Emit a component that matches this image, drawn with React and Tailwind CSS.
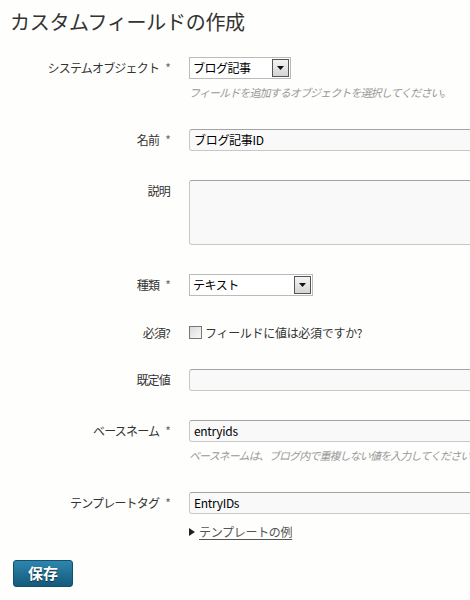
import React from 'react';

const font = { fontFamily: '"Noto Sans CJK JP", "Liberation Sans", sans-serif' };

// small select with the old-style arrow button
const Select = ({ value, width }) => (
  <div className={`flex h-[22px] items-center border border-[#bbb] bg-white ${width}`}>
    <span className="flex-1 pl-[3px] text-[12px] leading-none tracking-[-0.5px] text-black">{value}</span>
    <span className="mr-px flex h-[18px] w-[17px] items-center justify-center border border-[#555] bg-gradient-to-b from-[#f4f4f4] to-[#d4d4d4]">
      <svg width="7" height="4" viewBox="0 0 7 4"><path d="M0 0h7L3.5 4z" fill="#111" /></svg>
    </span>
  </div>
);

const Input = ({ value, tall }) => (
  <div className={`w-[300px] rounded-[3px] border border-[#c8c8c8] border-t-[#a4a4a4] bg-[#f9f9fa] px-[4px] text-[12px] tracking-[-0.3px] text-black ${tall ? 'h-[65px]' : 'flex h-[22px] items-center'}`}>
    {value}
  </div>
);

const Row = ({ label, req, children }) => (
  <div className="flex">
    <div className="w-[170px] shrink-0 pt-[2px] text-right text-[12px] leading-[18px] tracking-[-0.8px] text-[#333]">
      {label}
      {req && <span className="ml-[6px] text-[#666]">*</span>}
    </div>
    <div className="ml-[19px] flex flex-col">{children}</div>
  </div>
);

const Hint = ({ children }) => (
  <p className="mt-[6px] whitespace-nowrap text-[11px] leading-[15px] italic tracking-[-0.9px] text-[#999]">{children}</p>
);

export default function App() {
  return (
    <div className="min-h-[600px] w-[470px] overflow-hidden bg-[#fefefc]" style={font}>
      <h1 className="pl-[10px] pt-[9px] text-[20px] leading-[26px] font-normal tracking-[-0.3px] text-[#333]">カスタムフィールドの作成</h1>

      <div className="mt-[22px] flex flex-col gap-[29px]">
        <Row label="システムオブジェクト" req>
          <Select value="ブログ記事" width="w-[102px]" />
          <Hint>フィールドを追加するオブジェクトを選択してください。</Hint>
        </Row>

        <Row label="名前" req>
          <Input value="ブログ記事ID" />
        </Row>

        <Row label="説明">
          <Input tall />
        </Row>

        <Row label="種類" req>
          <Select value="テキスト" width="w-[124px]" />
        </Row>

        <div className="flex h-[15px] items-center">
          <div className="w-[170px] shrink-0 text-right text-[12px] tracking-[-0.8px] text-[#333]">必須?</div>
          <label className="ml-[19px] flex items-center text-[12px] tracking-[-0.3px] text-[#333]">
            <span className="mr-[3px] inline-block h-[13px] w-[13px] border border-[#777] bg-gradient-to-br from-[#dcdcdc] to-[#f8f8f8]" />
            フィールドに値は必須ですか?
          </label>
        </div>

        <Row label="既定値">
          <Input />
        </Row>

        <Row label="ベースネーム" req>
          <Input value="entryids" />
          <Hint>ベースネームは、ブログ内で重複しない値を入力してください。</Hint>
        </Row>

        <Row label="テンプレートタグ" req>
          <Input value="EntryIDs" />
          <div className="mt-[10px] flex items-center text-[12px] leading-[16px] tracking-[-0.3px] text-[#555]">
            <svg width="6" height="8" viewBox="0 0 6 8" className="mr-[4px]"><path d="M0 0l6 4-6 4z" fill="#222" /></svg>
            <span className="underline underline-offset-2">テンプレートの例</span>
          </div>
        </Row>
      </div>

      <div className="mt-[20px] pl-[13px]">
        <button className="h-[27px] w-[60px] rounded-[3px] border border-[#13506e] bg-gradient-to-b from-[#2e86ad] to-[#145a7b] text-[15px] font-bold text-white [text-shadow:0_1px_1px_rgba(0,0,0,0.5)]">
          保存
        </button>
      </div>
    </div>
  );
}
